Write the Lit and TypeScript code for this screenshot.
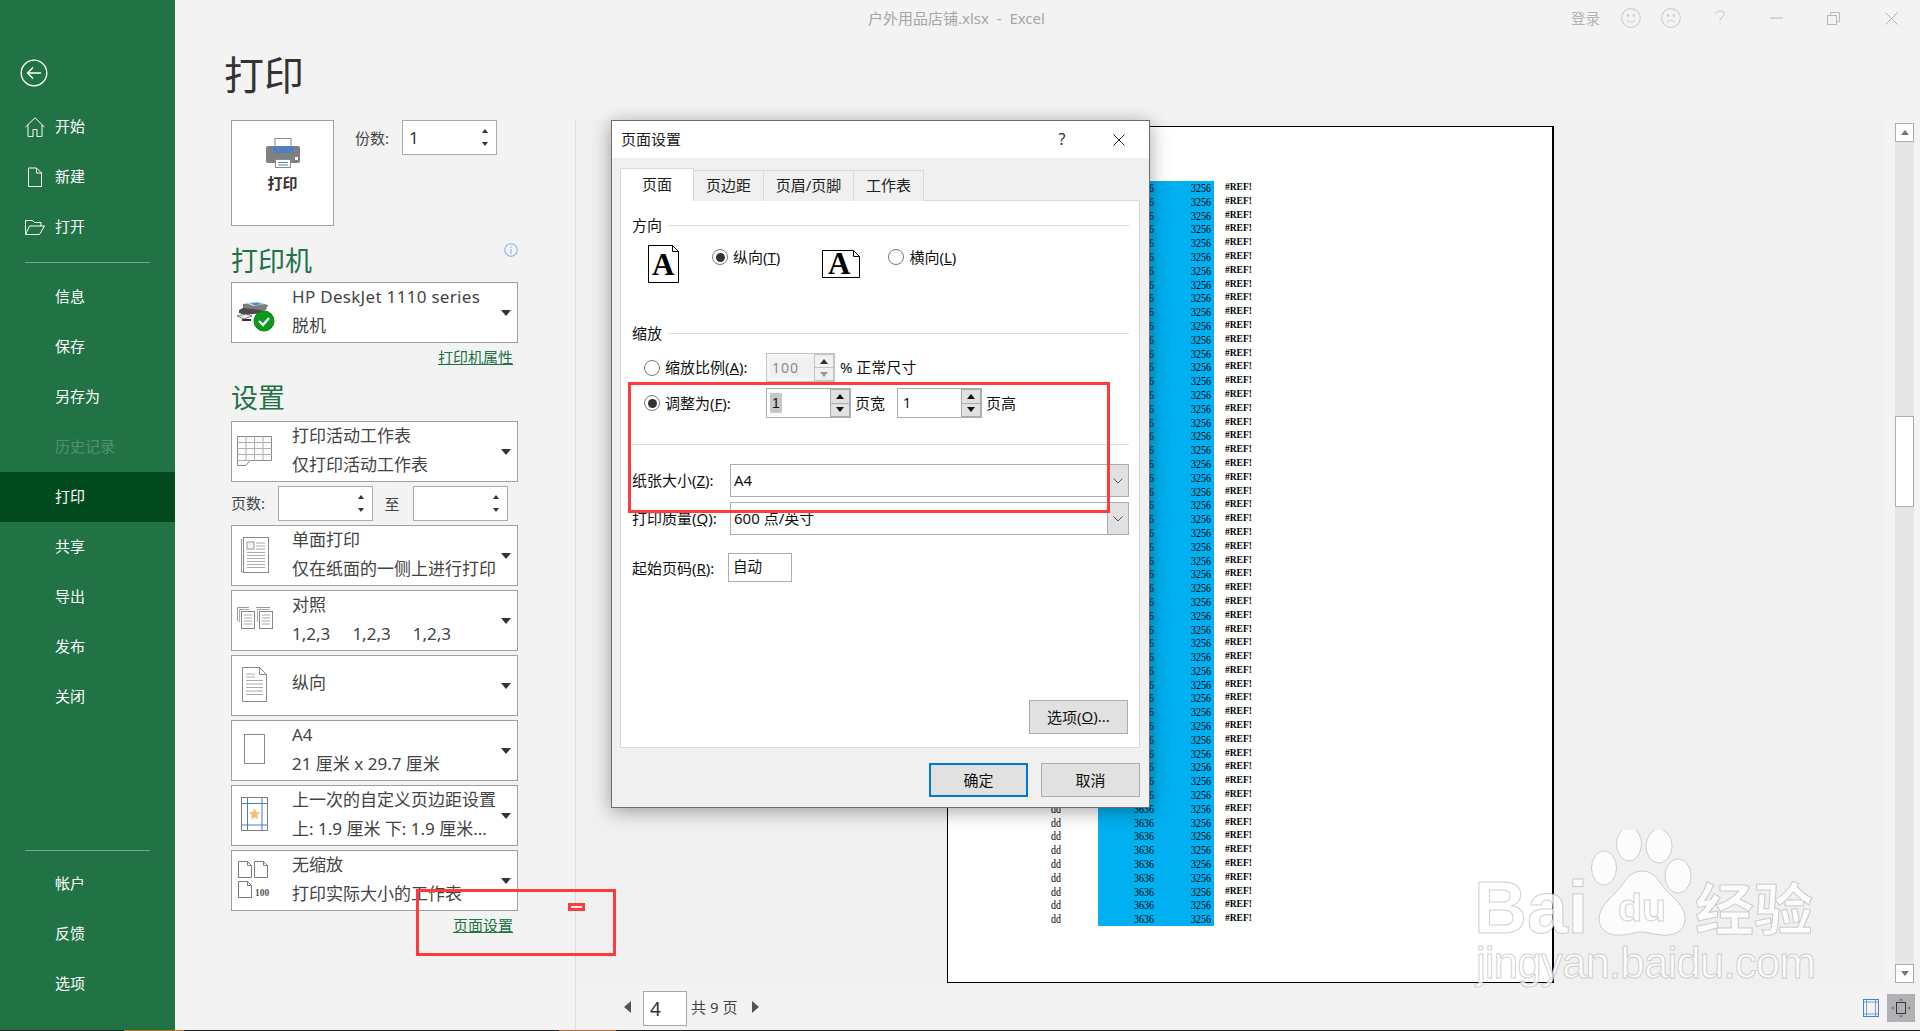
import { LitElement, html, css, svg } from "lit";
import { customElement } from "lit/decorators.js";

const arrowDown = html`<span class="caret"></span>`;

const icons: Record<string, unknown> = {
  printer: svg`
    <path d="M9 14l14-2 11 3-2 5-3 1-16 1-4-2z" fill="#7d7d7d"/>
    <path d="M12 13l11-1.5 8 2.5-12 2z" fill="#d4d8dc"/>
    <path d="M16 13.5l7-1 5 1.5-7 1.2z" fill="#3f8fd8"/>
    <path d="M5 20l4-2 18 2v3L11 25 5 23z" fill="#4a4a4a"/>
    <path d="M3 26l9-2 6 2-8 3z" fill="#e8e8e8" stroke="#555" stroke-width=".7"/>
    <path d="M8 29h9v2H8z" fill="#333"/>
    <circle cx="30" cy="31" r="10" fill="#0b9a1e" stroke="#0a7a18"/>
    <path d="M25 31l4 4 6-7" fill="none" stroke="#fff" stroke-width="2.4"/>`,
  sheet: svg`
    <path d="M3.5 7.5h34v24H16l-4 5H3.5z" fill="#fbfbfb" stroke="#8a8a8a"/>
    <path d="M3.5 13.5h34M3.5 19.5h34M3.5 25.5h34M3.5 31.5h13M12 7.5v24M20.5 7.5v24M29 7.5v24" stroke="#b0b0b0" fill="none"/>`,
  single: svg`
    <path d="M7.5 6v33h2" fill="none" stroke="#999"/>
    <rect x="9.5" y="4.5" width="25" height="35" fill="#fff" stroke="#888"/>
    <rect x="13" y="9" width="7" height="7" fill="#f4f4f4" stroke="#999"/>
    <path d="M22 10h9M22 13h9M22 16h9M13 19.500h18M13 22.500h18M13 25.500h18M13 28.500h18M13 31.500h18M13 34.500h18" stroke="#aaa"/>`,
  collate: svg`
    <path d="M3.500 23V9.500H15M22 9.500h14" fill="none" stroke="#999"/>
    <path d="M5.500 24V11.500H15" fill="none" stroke="#aaa"/>
    <rect x="7.500" y="13.500" width="13" height="17" fill="#fff" stroke="#888"/>
    <rect x="25.500" y="13.500" width="13" height="17" fill="#fff" stroke="#888"/>
    <path d="M23.500 24V11.500H36" fill="none" stroke="#aaa"/>
    <path d="M10 17h8M10 20h8M10 23h8M10 26h8M28 17h8M28 20h8M28 23h8M28 26h8" stroke="#aaa"/>`,
  portrait: svg`
    <path d="M8.500 4.500h17l7 7v27h-24z" fill="#fff" stroke="#888"/>
    <path d="M25.500 4.500v7h7" fill="none" stroke="#888"/>
    <path d="M12 11h9M12 14h9M12 17.500h17M12 21h17M12 24.500h17M12 28h17M12 31.500h17" stroke="#aaa"/>`,
  a4: svg`<rect x="10.500" y="6.500" width="20" height="29" fill="#fff" stroke="#888"/>`,
  margins: svg`
    <rect x="7.500" y="4.500" width="26" height="33" fill="#fff" stroke="#808080"/>
    <path d="M13.500 4.500v33M28 4.500v33M7.500 10.500h26M7.500 32h26" stroke="#4a7ebb" fill="none"/>
    <path d="M20.500 15.500l1.700 3.600 3.900.5-2.900 2.700.8 3.900-3.500-2-3.500 2 .8-3.900-2.900-2.700 3.900-.5z" fill="#f1c27d"/>`,
  noscale: svg`
    <path d="M4.500 3.500h9l4 4v12h-13zM20.500 3.500h9l4 4v12h-13zM4.500 23.500h9l4 4v12h-13z" fill="#fff" stroke="#7a7a7a"/>
    <path d="M13.500 3.500v4h4M29.500 3.500v4h4M13.500 23.500v4h4" fill="none" stroke="#7a7a7a"/>
    <text x="21" y="38" class="hundred">100</text>`,
};

const rows = Array.from({ length: 54 }, (_, i) => i);

@customElement("app-root")
export class AppRoot extends LitElement {
  static styles = css`
    :host { display: flex; flex-direction: column; width: 1920px; height: 1031px; position: relative; overflow: hidden;
      font-family: "Noto Sans", "Noto Sans CJK SC", sans-serif; background: #f3f3f3; color: #444; }
    * { box-sizing: border-box; }
    svg { display: block; flex: none; }
    .window { display: flex; height: 1030px; }
    .strip { display: flex; height: 1px; background: #222; flex: none; }
    .strip i { display: block; height: 1px; }
    .strip .o1 { margin-left: 124px; width: 60px; background: #b5702a; }
    .strip .o2 { margin-left: 375px; width: 57px; background: #b5702a; }

    /* sidebar */
    .side { width: 175px; flex: none; background: #217346; color: #fff; display: flex; flex-direction: column; }
    .back { height: 102px; padding: 59px 0 0 20px; }
    .item { height: 50px; display: flex; align-items: center; padding-left: 25px; font-size: 15px; }
    .item span { padding-bottom: 4px; }
    .item .ic { width: 20px; margin-right: 10px; flex: none; }
    .item.off { color: rgba(255,255,255,.24); }
    .item.on { background: #024b1e; }
    .rule { height: 1px; background: rgba(255,255,255,.38); margin: 10px 25px 9px; flex: none; }
    .rule.low { margin-top: auto; margin-bottom: 8px; }
    .side-end { height: 21px; flex: none; }

    /* main */
    .main { flex: 1; display: flex; flex-direction: column; min-width: 0; }
    .titlebar { height: 36px; flex: none; display: flex; align-items: center; padding: 0 22px 0 693px; font-size: 15px; color: #a6a6a6; white-space: pre; }
    .titlebar > span { padding-bottom: 2px; }
    .titlebar .tools { margin-left: auto; display: flex; align-items: center; }
    .login { font-size: 14.500px; margin-right: 21px; color: #b4b4b4; padding-bottom: 2px; }
    .tools svg { margin-right: 20px; }
    .tools svg.hq { margin: 0 45px 0 14px; }
    .tools svg.mn { margin-right: 44px; }
    .tools svg.rs { margin-right: 45px; }
    .tools svg.cl { margin-right: 0; }
    .h1 { height: 84px; flex: none; padding: 0 0 7px 49px; display: flex; align-items: center; font-size: 40px; color: #333; line-height: 1; }
    .body { flex: 1; display: flex; min-height: 0; }

    .left { width: 401px; flex: none; padding-left: 56px; border-right: 1px solid #dcdcdc; }
    .top { display: flex; align-items: flex-start; }
    .pbtn { width: 103px; height: 106px; background: #fff; border: 1px solid #a0a0a0; display: flex; flex-direction: column; align-items: center; padding-top: 17px; font-size: 15px; font-weight: 700; color: #333; }
    .pbtn span { margin-top: 4px; line-height: 22px; }
    .copies { margin-left: 21px; display: flex; align-items: center; font-size: 15px; color: #444; height: 35px; }
    .box { height: 35px; background: #fff; border: 1px solid #ababab; display: flex; align-items: center; justify-content: space-between; padding: 0 8px 0 6px; font-size: 17px; color: #333; }
    .copies .box { margin-left: 13px; width: 95px; }
    .sp { display: flex; flex-direction: column; gap: 9px; }
    .sp i { display: block; width: 0; height: 0; border: 3.500px solid transparent; }
    .sp i:first-child { border-top: 0; border-bottom: 4px solid #333; }
    .sp i:last-child { border-bottom: 0; border-top: 4px solid #333; }
    .h2 { width: 287px; height: 36px; display: flex; justify-content: space-between; align-items: flex-start; font-size: 27px; line-height: 36px; color: #217346; }
    .h2.first { margin-top: 17px; margin-bottom: 3px; }
    .h2.second { margin-top: 14px; margin-bottom: 4px; line-height: 34px; }
    .combo { width: 287px; height: 61px; background: #fff; border: 1px solid #a0a0a0; display: flex; align-items: center; margin-bottom: 4px; font-size: 17px; color: #444; }
    .combo .ci { width: 48px; margin-left: 2px; margin-right: 10px; flex: none; margin-top: -1px; }
    .combo .txt { flex: 1; min-width: 0; padding-bottom: 4px; }
    .combo .txt div { line-height: 29px; white-space: pre; }
    .combo .txt.one { padding-bottom: 7px; }
    .combo .txt.lat div:first-child { letter-spacing: .3px; }
    .caret { width: 0; height: 0; border: 5px solid transparent; border-bottom: 0; border-top: 6px solid #333; margin-right: 6px; flex: none; }
    .hundred { font: 700 9.500px "Liberation Serif", serif; fill: #555; }
    .link { width: 287px; padding-right: 5px; text-align: right; font-size: 15px; line-height: 20px; color: #217346; text-decoration: underline; }
    .link.a { margin: 4px 0 1px; }
    .pages { width: 287px; height: 35px; display: flex; align-items: center; margin-bottom: 4px; font-size: 15px; }
    .pages .box { width: 95px; justify-content: flex-end; }
    .pages .lab { width: 47px; padding-bottom: 2px; }
    .pages .to { width: 40px; text-align: center; padding-right: 2px; }

    /* preview */
    .right { flex: 1; display: flex; flex-direction: column; min-width: 0; }
    .pv { height: 865px; flex: none; display: flex; }
    .pv-area { width: 1307px; flex: none; background: #f0f0f0; padding: 6px 0 0 371px; }
    .page { width: 607px; height: 857px; background: #fff; border: 1px solid #000; border-right-width: 2px; padding-top: 54px; font: 10px/13.800px "Liberation Serif", serif; color: #000; }
    .row { display: flex; height: 13.800px; }
    .row span { display: inline-block; transform: scaleY(1.2); }
    .c-dd { width: 150px; padding-left: 103px; }
    .c-blue { width: 116px; background: #00b0f0; display: flex; justify-content: flex-end; padding-right: 3px; }
    .c-blue span:first-child { margin-right: 37px; }
    .c-ref { padding-left: 11px; font-size: 9.500px; font-weight: 700; }
    .scroll { width: 37px; flex: none; padding: 3px 6px 2px 12px; display: flex; flex-direction: column; }
    .sb-track { flex: 1; background: #e6e6e6; display: flex; flex-direction: column; }
    .sb-btn { height: 19px; background: #fff; border: 1px solid #adadad; display: flex; align-items: center; justify-content: center; flex: none; }
    .sb-thumb { width: 19px; height: 91px; margin-top: 274px; background: #fff; border: 1px solid #adadad; }
    .tri-u { width: 0; height: 0; border: 4.500px solid transparent; border-top: 0; border-bottom: 5px solid #777; }
    .tri-d { width: 0; height: 0; border: 4.500px solid transparent; border-bottom: 0; border-top: 5px solid #777; }
    .foot { flex: 1; display: flex; align-items: flex-start; padding: 6px 5px 0 48px; font-size: 15px; color: #444; }
    .pgl { width: 0; height: 0; border: 6px solid transparent; border-left: 0; border-right: 7px solid #555; margin: 10px 12px 0 0; }
    .pgr { width: 0; height: 0; border: 6px solid transparent; border-right: 0; border-left: 7px solid #555; margin: 10px 0 0 15px; }
    .pgi { width: 44px; height: 35px; background: #fff; border: 1px solid #a8a8a8; display: flex; align-items: center; padding-left: 6px; font-size: 19px; color: #333; margin-right: 4px; }
    .pgt { line-height: 32px; }
    .views { margin-left: auto; display: flex; align-items: center; margin-top: 3px; }
    .views .v2 { width: 28px; height: 28px; background: #b1b1b1; margin-left: 8px; display: flex; align-items: center; justify-content: center; }

    /* dialog */
    .dlg { position: absolute; left: 611px; top: 120px; width: 539px; height: 688px; background: #f0f0f0; border: 1px solid #6d6d6d; box-shadow: 0 3px 18px rgba(0,0,0,.36); display: flex; flex-direction: column; color: #111; font-size: 15px; }
    .dlg-t { height: 37px; flex: none; background: #fff; display: flex; align-items: center; padding-left: 9px; color: #222; }
    .dlg-t span { padding-bottom: 2px; }
    .dlg-t .q { margin-left: auto; width: 14px; text-align: center; font-size: 16px; color: #333; margin-right: 44px; }
    .dlg-t svg { margin-right: 24px; }
    .dlg-b { flex: 1; padding: 10px 9px 11px 8px; display: flex; flex-direction: column; min-height: 0; }
    .tabs { display: flex; align-items: flex-end; height: 33px; margin-bottom: -1px; position: relative; }
    .tab { height: 31px; border: 1px solid #d9d9d9; border-left: 0; border-bottom: 0; display: flex; align-items: center; justify-content: center; background: #f0f0f0; color: #222; padding-bottom: 3px; }
    .tab.on { height: 33px; width: 74px; background: #fff; border-left: 1px solid #d9d9d9; position: relative; z-index: 1; }
    .pane { height: 548px; flex: none; background: #fff; border: 1px solid #d9d9d9; padding: 15px 10px 0 11px; display: flex; flex-direction: column; }
    .sec { height: 20px; display: flex; align-items: center; gap: 6px; flex: none; line-height: 20px; }
    .sec span { padding-bottom: 2px; }
    .sec i { flex: 1; height: 1px; background: #dcdcdc; margin-top: -2px; }
    .orient { display: flex; align-items: flex-start; padding-left: 16px; margin-top: 9px; height: 38px; flex: none; }
    .rad { display: flex; align-items: center; height: 24px; gap: 5px; white-space: nowrap; }
    .rad span:last-child { padding-bottom: 2px; }
    .radio { width: 16px; height: 16px; border-radius: 50%; border: 1.500px solid #7a7a7a; background: #fff; display: flex; align-items: center; justify-content: center; flex: none; }
    .radio.on::after { content: ""; width: 9px; height: 9px; border-radius: 50%; background: #333; }
    .ai { font: 700 31px "Liberation Serif", serif; fill: #000; }
    .sc { display: flex; align-items: center; padding-left: 12px; flex: none; white-space: nowrap; }
    .sc .rad { width: 122px; }
    .sc > span { padding-bottom: 2px; }
    .spin { height: 100%; background: #fff; border: 1px solid #adadad; display: flex; justify-content: space-between; align-items: stretch; padding-left: 3px; }
    .spin .val { padding: 0 2px; align-self: center; font-size: 14px; line-height: 20px; }
    .spin .val.sel { background: #c8c8c8; padding: 0 2px; font-family: "Liberation Sans", sans-serif; }
    .sbs { width: 20px; flex: none; display: flex; flex-direction: column; }
    .sbs b { flex: 1; background: #e1e1e1; border: 1px solid #adadad; display: flex; align-items: center; justify-content: center; }
    .sbs b + b { border-top: 0; }
    .sbs .u { width: 0; height: 0; border: 4px solid transparent; border-top: 0; border-bottom: 5px solid #111; }
    .sbs .d { width: 0; height: 0; border: 4px solid transparent; border-bottom: 0; border-top: 5px solid #111; }
    .dis { border-color: #c4c4c4; background: #f5f5f5; }
    .dis .val { color: #8a8a8a; background: #f0f0f0; letter-spacing: 1px; flex: 1; }
    .dis .sbs b { background: #f0f0f0; border-color: #c4c4c4; }
    .dis .sbs .u { border-bottom-color: #333; }
    .dis .sbs .d { border-top-color: #999; }
    .fit1 { height: 30px; margin-top: 6px; }
    .hr { height: 1px; background: #dcdcdc; margin-top: 26px; flex: none; }
    .sel-row { display: flex; align-items: center; height: 33px; flex: none; white-space: nowrap; }
    .sel-row .lb { width: 98px; padding-bottom: 2px; }
    .select { flex: 1; height: 33px; background: #fff; border: 1px solid #adadad; display: flex; align-items: center; justify-content: space-between; padding-left: 3px; font-size: 15px; }
    .select > span { padding-bottom: 2px; }
    .select .chev { width: 21px; height: 100%; background: #e1e1e1; border-left: 1px solid #adadad; display: flex; align-items: center; justify-content: center; }
    .start { display: flex; align-items: center; height: 29px; margin-top: 18px; flex: none; white-space: nowrap; }
    .start .lb { width: 96px; }
    .start .inp { width: 64px; height: 29px; background: #fff; border: 1px solid #adadad; padding-left: 4px; line-height: 25px; font-size: 14.500px; }
    .btn { width: 99px; height: 34px; background: #e1e1e1; border: 1px solid #adadad; display: flex; align-items: center; justify-content: center; color: #111; flex: none; white-space: nowrap; padding-bottom: 2px; }
    .btn.def { border: 2px solid #0078d7; }
    .opt { margin-top: auto; margin-bottom: 13px; align-self: flex-end; margin-right: 1px; }
    .dlg-f { display: flex; justify-content: flex-end; gap: 13px; margin-top: 15px; }

    .red { position: absolute; border: 3px solid #ff3b3b; pointer-events: none; }
    .r1 { left: 628px; top: 382px; width: 482px; height: 131px; }
    .r2 { left: 416px; top: 889px; width: 200px; height: 67px; }
    .r3 { left: 568px; top: 903px; width: 17px; height: 8px; background: #f3f3f3; }
    .wm { position: absolute; left: 1470px; top: 830px; pointer-events: none; }
    .wm text { fill: rgba(255,255,255,.8); stroke: rgba(170,170,170,.55); stroke-width: 1; }
    .wm .f { fill: rgba(255,255,255,.8); stroke: rgba(170,170,170,.55); stroke-width: 1; }
    .wm .b { font: 700 74px "Liberation Sans", sans-serif; }
    .wm .d { font: 700 38px "Liberation Sans", sans-serif; }
    .wm .j { font: 400 44px "Liberation Sans", sans-serif; }
    .wm .c { font: 700 56px "Noto Sans CJK SC", sans-serif; }
    u { text-decoration: underline; }
  `;

  private combo(icon: string, a: string, b?: string, lat = false) {
    return html`<div class="combo">
      <div class="ci"><svg width="44" height="44" viewBox="0 0 44 44">${icons[icon]}</svg></div>
      <div class="txt ${b ? "" : "one"} ${lat ? "lat" : ""}"><div>${a}</div>${b ? html`<div>${b}</div>` : ""}</div>
      ${arrowDown}
    </div>`;
  }

  private item(label: string, cls = "", ic: unknown = null) {
    return html`<div class="item ${cls}">${ic ? html`<div class="ic"><svg width="20" height="20" viewBox="0 0 20 20" fill="none" stroke="#fff" stroke-width="1">${ic}</svg></div>` : html`<div class="ic"></div>`}<span>${label}</span></div>`;
  }

  private spin(val: string, w: number, cls = "", valCls = "") {
    return html`<div class="spin ${cls}" style="width:${w}px"><span class="val ${valCls}">${val}</span><div class="sbs"><b><i class="u"></i></b><b><i class="d"></i></b></div></div>`;
  }

  private chev() {
    return html`<div class="chev"><svg width="10" height="6" viewBox="0 0 10 6"><path d="M.500.500L5 5 9.500.500" fill="none" stroke="#555"/></svg></div>`;
  }

  render() {
    return html`
      <div class="window">
        <nav class="side">
          <div class="back"><svg width="28" height="28" viewBox="0 0 28 28" fill="none" stroke="#fff" stroke-width="1.300"><circle cx="14" cy="14" r="12.800"/><path d="M21 14H7.500M13 8.500L7.500 14l5.500 5.500"/></svg></div>
          ${this.item("开始", "", svg`<path d="M.5 10L10 .8 19.500 10M3 8v11.500h5v-7h4v7h5V8"/>`)}
          ${this.item("新建", "", svg`<path d="M3.500 1h8l5 5v13.500h-13zM11.500 1v5h5"/>`)}
          ${this.item("打开", "", svg`<path d="M.5 17V3.500h7l2 2h6.500V9M.5 17.500h14L19.500 9H4.500z"/>`)}
          <div class="rule"></div>
          ${this.item("信息")}
          ${this.item("保存")}
          ${this.item("另存为")}
          ${this.item("历史记录", "off")}
          ${this.item("打印", "on")}
          ${this.item("共享")}
          ${this.item("导出")}
          ${this.item("发布")}
          ${this.item("关闭")}
          <div class="rule low"></div>
          ${this.item("帐户")}
          ${this.item("反馈")}
          ${this.item("选项")}
          <div class="side-end"></div>
        </nav>
        <div class="main">
          <header class="titlebar">
            <span>户外用品店铺.xlsx  -  Excel</span>
            <div class="tools">
              <span class="login">登录</span>
              <svg width="20" height="20" viewBox="0 0 20 20" fill="none" stroke="#d0d0d0" stroke-width="1.200"><circle cx="10" cy="10" r="9.300"/><circle cx="7" cy="7.500" r=".8" fill="#d0d0d0"/><circle cx="13" cy="7.500" r=".8" fill="#d0d0d0"/><path d="M6 12c2 3 6 3 8 0"/></svg>
              <svg width="20" height="20" viewBox="0 0 20 20" fill="none" stroke="#d0d0d0" stroke-width="1.200"><circle cx="10" cy="10" r="9.300"/><circle cx="7" cy="7.500" r=".8" fill="#d0d0d0"/><circle cx="13" cy="7.500" r=".8" fill="#d0d0d0"/><path d="M6 14.500c2-3 6-3 8 0"/></svg>
              <svg class="hq" width="10" height="16" viewBox="0 0 10 16" fill="none" stroke="#d4d4d4" stroke-width="1.300"><path d="M1 4c0-4 8-4 8 0 0 3-4 3-4 7M5 13v2"/></svg>
              <svg class="mn" width="13" height="2" viewBox="0 0 13 2"><path d="M0 1h13" stroke="#b8b8b8"/></svg>
              <svg class="rs" width="13" height="13" viewBox="0 0 13 13" fill="none" stroke="#b8b8b8"><path d="M3.500 3V.5h9v9H10"/><rect x=".5" y="3.500" width="9" height="9"/></svg>
              <svg class="cl" width="13" height="13" viewBox="0 0 13 13" fill="none" stroke="#b0b0b0"><path d="M.5.500l12 12M12.500.500l-12 12"/></svg>
            </div>
          </header>
          <div class="h1">打印</div>
          <div class="body">
            <section class="left">
              <div class="top">
                <div class="pbtn">
                  <svg width="34" height="30" viewBox="0 0 34 30">
                    <rect x="9" y=".5" width="16" height="10" fill="#fff" stroke="#8a8a8a"/>
                    <rect x="0" y="8" width="34" height="17" rx="2" fill="#808080"/>
                    <rect x="7" y="8" width="21" height="7" fill="#4f81bd"/>
                    <rect x="29" y="19" width="3" height="3" fill="#fff"/>
                    <rect x="9.500" y="21.500" width="15" height="8" fill="#fff" stroke="#8a8a8a"/>
                    <path d="M12 24.500h10M12 27h10" stroke="#4f81bd"/>
                  </svg>
                  <span>打印</span>
                </div>
                <div class="copies"><span>份数:</span><div class="box"><span>1</span><div class="sp"><i></i><i></i></div></div></div>
              </div>
              <div class="h2 first"><span>打印机</span><svg width="14" height="14" viewBox="0 0 14 14" fill="none" stroke="#8fb4e0" stroke-width="1.100"><circle cx="7" cy="7" r="6.300"/><path d="M7 6v5M7 3.300v1.400"/></svg></div>
              ${this.combo("printer", "HP DeskJet 1110 series", "脱机", true)}
              <div class="link a">打印机属性</div>
              <div class="h2 second"><span>设置</span></div>
              ${this.combo("sheet", "打印活动工作表", "仅打印活动工作表")}
              <div class="pages">
                <span class="lab">页数:</span>
                <div class="box"><div class="sp"><i></i><i></i></div></div>
                <span class="to">至</span>
                <div class="box"><div class="sp"><i></i><i></i></div></div>
              </div>
              ${this.combo("single", "单面打印", "仅在纸面的一侧上进行打印")}
              ${this.combo("collate", "对照", "1,2,3     1,2,3     1,2,3")}
              ${this.combo("portrait", "纵向")}
              ${this.combo("a4", "A4", "21 厘米 x 29.7 厘米")}
              ${this.combo("margins", "上一次的自定义页边距设置", "上: 1.9 厘米 下: 1.9 厘米...")}
              ${this.combo("noscale", "无缩放", "打印实际大小的工作表")}
              <div class="link">页面设置</div>
            </section>
            <section class="right">
              <div class="pv">
                <div class="pv-area">
                  <div class="page">
                    ${rows.map((i) => html`<div class="row"><div class="c-dd">${i >= 45 ? html`<span>dd</span>` : ""}</div><div class="c-blue"><span>3636</span><span>3256</span></div><div class="c-ref"><span>#REF!</span></div></div>`)}
                  </div>
                </div>
                <div class="scroll">
                  <div class="sb-btn"><i class="tri-u"></i></div>
                  <div class="sb-track"><div class="sb-thumb"></div></div>
                  <div class="sb-btn"><i class="tri-d"></i></div>
                </div>
              </div>
              <div class="foot">
                <i class="pgl"></i>
                <div class="pgi">4</div>
                <span class="pgt">共 9 页</span>
                <i class="pgr"></i>
                <div class="views">
                  <svg width="16" height="18" viewBox="0 0 16 18" fill="none"><rect x=".5" y=".5" width="15" height="17" stroke="#4a7ebb"/><path d="M3.500.5v17M12.500.5v17M.5 3h15M.5 15h15" stroke="#7a9cc8"/></svg>
                  <div class="v2"><svg width="20" height="20" viewBox="0 0 20 20" fill="none"><rect x="5.500" y="4.500" width="9" height="11" stroke="#333"/><path d="M10 .5l2 2h-4zM10 19.500l2-2h-4zM.5 10l2-2v4zM19.500 10l-2-2v4z" fill="#3f74b8"/></svg></div>
                </div>
              </div>
            </section>
          </div>
        </div>
      </div>
      <div class="strip"><i class="o1"></i><i class="o2"></i></div>

      <div class="dlg">
        <div class="dlg-t"><span>页面设置</span><span class="q">?</span><svg width="12" height="12" viewBox="0 0 12 12" fill="none" stroke="#222"><path d="M.5.500l11 11M11.500.500l-11 11"/></svg></div>
        <div class="dlg-b">
          <div class="tabs">
            <div class="tab on">页面</div>
            <div class="tab" style="width:70px">页边距</div>
            <div class="tab" style="width:90px">页眉/页脚</div>
            <div class="tab" style="width:70px">工作表</div>
          </div>
          <div class="pane">
            <div class="sec"><span>方向</span><i></i></div>
            <div class="orient">
              <svg width="31" height="38" viewBox="0 0 31 38"><path d="M.5.500h24l6 6v31H.5z" fill="#fff" stroke="#000"/><path d="M24.500.500v6h6" fill="none" stroke="#000"/><text x="4" y="30" class="ai">A</text></svg>
              <div class="rad" style="margin-left:33px"><span class="radio on"></span><span>纵向(<u>T</u>)</span></div>
              <svg style="margin:5px 0 0 42px" width="38" height="28" viewBox="0 0 38 28"><path d="M.5.500h31l6 6v21H.5z" fill="#fff" stroke="#000"/><path d="M31.500.500v6h6" fill="none" stroke="#000"/><text x="6" y="24" class="ai">A</text></svg>
              <div class="rad" style="margin-left:28px"><span class="radio"></span><span>横向(<u>L</u>)</span></div>
            </div>
            <div class="sec" style="margin-top:41px"><span>缩放</span><i></i></div>
            <div class="sc" style="height:29px;margin-top:9px">
              <div class="rad"><span class="radio"></span><span>缩放比例(<u>A</u>):</span></div>
              ${this.spin("100", 69, "dis")}
              <span style="margin-left:5px">% 正常尺寸</span>
            </div>
            <div class="sc fit1">
              <div class="rad"><span class="radio on"></span><span>调整为(<u>F</u>):</span></div>
              ${this.spin("1", 85, "", "sel")}
              <span style="margin-left:4px;width:42px">页宽</span>
              ${this.spin("1", 85)}
              <span style="margin-left:4px">页高</span>
            </div>
            <div class="hr"></div>
            <div class="sel-row" style="margin-top:19px"><span class="lb">纸张大小(<u>Z</u>):</span><div class="select"><span>A4</span>${this.chev()}</div></div>
            <div class="sel-row" style="margin-top:5px"><span class="lb">打印质量(<u>Q</u>):</span><div class="select"><span>600 点/英寸</span>${this.chev()}</div></div>
            <div class="start"><span class="lb">起始页码(<u>R</u>):</span><div class="inp">自动</div></div>
            <div class="btn opt">选项(<u>O</u>)...</div>
          </div>
          <div class="dlg-f"><div class="btn def">确定</div><div class="btn">取消</div></div>
        </div>
      </div>

      <div class="red r1"></div>
      <div class="red r2"></div>
      <div class="red r3"></div>

      <svg class="wm" width="352" height="190" viewBox="0 0 352 190">
        <ellipse cx="159" cy="14" rx="12.500" ry="17" class="f"/>
        <ellipse cx="189" cy="16" rx="13" ry="17" class="f"/>
        <ellipse cx="134" cy="38" rx="12.500" ry="17" class="f"/>
        <ellipse cx="208" cy="46" rx="13" ry="17" class="f"/>
        <path class="f" d="M172 41c14 0 18 14 27 22 8 8 17 16 16 27-1 12-12 16-23 15-7 0-13-3-20-3-7 0-13 3-21 3-11 1-21-4-22-15 0-11 8-19 16-27 9-8 13-22 27-22z"/>
        <text class="b" x="4" y="103" textLength="114" lengthAdjust="spacingAndGlyphs">Bai</text>
        <text class="d" x="148" y="91" textLength="48" lengthAdjust="spacingAndGlyphs">du</text>
        <text class="c" x="225" y="100" textLength="118" lengthAdjust="spacingAndGlyphs">经验</text>
        <text class="j" x="6" y="148" textLength="340" lengthAdjust="spacing">jingyan.baidu.com</text>
      </svg>
    `;
  }
}
